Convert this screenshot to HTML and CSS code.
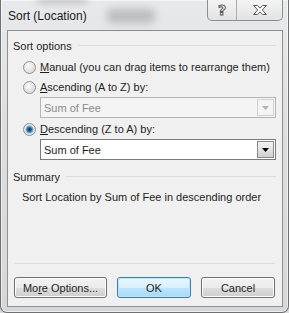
FILE: index.html
```html
<!DOCTYPE html>
<html><head>
  <meta charset="UTF-8">
  <title>Sort (Location)</title>
  <link rel="stylesheet" href="styles.css">
</head><body>
<div id="window">
  <div class="titlebar">
    <span class="blur blur-a"></span>
    <span class="blur blur-b"></span>
    <span class="title">Sort (Location)</span>
    <div class="capbtns">
      <span class="capbtn help">?</span>
      <span class="capbtn close"><svg width="16" height="12" viewBox="0 0 16 12"><path d="M1.5 1.5h4l2.5 2.6 2.5-2.6h4l-4.3 4.5 4.3 4.5h-4l-2.5-2.6-2.5 2.6h-4l4.3-4.5z" fill="#fafafa" stroke="#5a5a5a" stroke-width="1" stroke-linejoin="round"/></svg></span>
    </div>
  </div>
  <div class="client">
    <div class="group"><span>Sort options</span></div>
    <div class="radio"><span class="dot"></span><span><u>M</u>anual (you can drag items to rearrange them)</span></div>
    <div class="radio"><span class="dot"></span><span><u>A</u>scending (A to Z) by:</span></div>
    <div class="combo off"><span class="val">Sum of Fee</span><span class="drop"><svg width="7" height="4" viewBox="0 0 7 4"><path d="M0 0h7L3.5 4z" fill="#b4b4b4"/></svg></span></div>
    <div class="radio"><span class="dot on"></span><span><u>D</u>escending (Z to A) by:</span></div>
    <div class="combo"><span class="val">Sum of Fee</span><span class="drop"><svg width="7" height="4" viewBox="0 0 7 4"><path d="M0 0h7L3.5 4z" fill="#000"/></svg></span></div>
    <div class="group sum"><span>Summary</span></div>
    <div class="summary">Sort Location by Sum of Fee in descending order</div>
    <div class="spacer"></div>
    <div class="sep"></div>
    <div class="buttons">
      <span class="btn more">Mo<u>r</u>e Options...</span>
      <span class="btn def">OK</span>
      <span class="btn">Cancel</span>
    </div>
  </div>
</div>
</body>
</html>
```
FILE: styles.css
```css
html,body{
  margin:0;
  height:100%;
  background:#d8dadc;
}
body{
  font-family:"Liberation Sans",Arial,sans-serif;
  font-size:11px;
  color:#1e1e1e;
}
#window{
  box-sizing:border-box;
  width:289px;
  height:313px;
  display:flex;
  flex-direction:column;
  padding:0 5px 5px 6px;
  border:1px solid #6e7072;
  border-top:none;
  border-radius:0 0 7px 7px;
  background:linear-gradient(#e8e9ea,#dcdedf 40%,#d5d7d9);
  box-shadow:inset 0 0 0 1px rgba(255,255,255,.55);
}
.titlebar{
  position:relative;
  height:30px;
  display:flex;
  align-items:flex-start;
}
.title{
  position:relative;
  margin:9px 0 0 1px;
  font-size:12px;
  color:#1a1a1a;
}
.blur{
  position:absolute;
  background:#6a6a6a;
  filter:blur(4px);
  opacity:.45;
  border-radius:4px;
}
.blur-a{left:30px;top:-4px;width:50px;height:6px;}
.blur-b{left:100px;top:9px;width:48px;height:14px;opacity:.35;}
.capbtns{
  margin-left:auto;
  display:flex;
  height:20px;
  border:1px solid #8c8e90;
  border-top:none;
  border-radius:0 0 5px 5px;
  background:linear-gradient(#f4f4f4,#e2e3e4);
  overflow:hidden;
}
.capbtn{
  display:flex;
  align-items:center;
  justify-content:center;
}
.help{
  width:28px;
  border-right:1px solid #a9abad;
  font-family:"DejaVu Sans",sans-serif;
  font-weight:bold;
  font-size:14px;
  color:#f6f6f6;
  -webkit-text-stroke:1px #5a5a5a;
}
.close{
  width:45px;
}
.client{
  flex:1;
  display:flex;
  flex-direction:column;
  border:1px solid #8e9092;
  background:#f0f0f0;
  padding:7px 6px 8px 5px;
}
.group{
  display:flex;
  align-items:center;
  height:15px;
}
.group::after{
  content:"";
  flex:1;
  height:1px;
  margin-left:6px;
  background:#dcdcdc;
}
.group.sum{
  margin-top:9px;
}
.radio{
  display:flex;
  align-items:center;
  height:16px;
  margin-top:4px;
  padding-left:10px;
}
.group + .radio{
  margin-top:6px;
}
.dot{
  box-sizing:border-box;
  width:13px;
  height:13px;
  margin-right:4px;
  border-radius:50%;
  border:1px solid #8f9192;
  background:radial-gradient(circle at 40% 35%,#fbfbfb,#dcdcdc 70%,#c8c8c8);
}
.dot.on{
  background:radial-gradient(circle,#0d2d4a 0,#2866a0 2px,#7eb5e0 3.5px,#cfe3f4 4.5px,#ececec 5px,#d4d4d4 6px);
}
.combo{
  display:flex;
  align-items:center;
  height:21px;
  box-sizing:border-box;
  margin:2px 0 0 27px;
  border:1px solid #7b7b7b;
  background:#fff;
}
.combo.off{
  border-color:#b5b5b5;
  background:#f4f4f4;
  color:#8a8a8a;
}
.combo + .radio{
  margin-top:3px;
}
.radio + .combo:not(.off){
  margin-top:2px;
}
.val{
  flex:1;
  padding-left:3px;
}
.drop{
  box-sizing:border-box;
  width:17px;
  height:17px;
  margin-right:1px;
  display:flex;
  align-items:center;
  justify-content:center;
  border:1px solid #8a8a8a;
  background:linear-gradient(#f2f2f2,#e4e4e4 50%,#d0d0d0);
}
.off .drop{
  border-color:#d2d2d2;
  background:#f4f4f4;
}
.summary{
  margin:5px 0 0 9px;
  line-height:16px;
}
.spacer{
  flex:1;
}
.sep{
  height:1px;
  background:#dcdcdc;
  margin:0 1px 13px 2px;
}
.buttons{
  display:flex;
  gap:10px;
  padding:0 0 0 1px;
}
.btn{
  box-sizing:border-box;
  height:21px;
  width:74px;
  display:flex;
  align-items:center;
  justify-content:center;
  border:1px solid #707070;
  border-radius:3px;
  background:linear-gradient(#f2f2f2,#ebebeb 50%,#dddddd 51%,#cfcfcf);
  box-shadow:inset 0 0 0 1px #fcfcfc;
}
.btn.more{
  width:93px;
}
.btn.def{
  border-color:#3c7fb1;
  box-shadow:inset 0 0 0 1px #b8e6fb;
  background:linear-gradient(#eaf6fd,#d9f0fc 50%,#bee6fd 51%,#a7d9f5);
}
```
